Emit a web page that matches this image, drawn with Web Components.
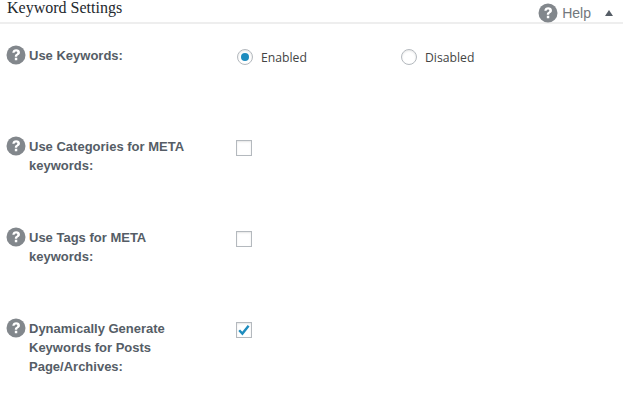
<!DOCTYPE html>
<html><head><meta charset="utf-8"><style>
html,body{margin:0;padding:0;background:#fff}
body{width:623px;height:402px;overflow:hidden}
</style></head><body>
<settings-panel>
<setting-row label="Use Keywords:"><radio-field checked>Enabled</radio-field><radio-field>Disabled</radio-field></setting-row>
<setting-row label="Use Categories for META keywords:"><check-field></check-field></setting-row>
<setting-row label="Use Tags for META keywords:"><check-field></check-field></setting-row>
<setting-row label="Dynamically Generate Keywords for Posts Page/Archives:"><check-field checked></check-field></setting-row>
</settings-panel>
<script>
const HELP=`<svg width="20" height="20" viewBox="0 0 20 20" aria-hidden="true"><circle cx="10" cy="10" r="9.5" fill="#82878c"/><path transform="translate(1 1) scale(.9)" d="M5.9 7.5C6.1 5 7.9 3.7 10.2 3.7c2.5 0 4.2 1.4 4.2 3.4 0 1.5-.8 2.3-1.9 3-.9.6-1.2 1-1.2 1.9H8.7c0-1.5.4-2.3 1.5-3 .9-.6 1.3-1 1.3-1.7 0-.8-.6-1.3-1.4-1.3-.9 0-1.6.6-1.7 1.6z M8.7 13h2.7v2.8H8.7z" fill="#fff"/></svg>`;
class SettingsPanel extends HTMLElement{constructor(){super();this.attachShadow({mode:'open'}).innerHTML=`<style>
:host{display:block;width:623px}
header{height:22px;border-bottom:2px solid #eee;display:flex;align-items:flex-start;justify-content:space-between}
h2{margin:0;padding:0 0 0 7px;font:400 16px/15px "Liberation Serif",serif;color:#23282d}
.tools{display:flex;align-items:center;margin-top:3px;padding-right:10px;color:#72777c;font:14px/20px "Liberation Sans",sans-serif}
.tools svg{margin-right:4px}
.tri{width:0;height:0;border:4.5px solid transparent;border-top:0;border-bottom:6px solid #555d66;margin-left:14px}
main{padding-top:22px}
</style><header><h2>Keyword Settings</h2><div class="tools">${HELP}<span>Help</span><i class="tri"></i></div></header><main><slot></slot></main>`}}
class SettingRow extends HTMLElement{constructor(){super();this.attachShadow({mode:'open'}).innerHTML=`<style>
:host{display:grid;grid-template-columns:236px 1fr;height:91px;box-sizing:border-box}
.l{display:flex;align-items:flex-start;padding-left:6px;gap:3px}
.l svg{flex:none;margin-top:-1px}
.t{font:700 13px/19px "Liberation Sans",sans-serif;color:#555d66;width:170px}
.c{display:flex;padding-top:1px}
</style><div class="l">${HELP}<div class="t"></div></div><div class="c"><slot></slot></div>`;
this.shadowRoot.querySelector('.t').textContent=this.getAttribute('label')}}
class RadioField extends HTMLElement{constructor(){super();const on=this.hasAttribute('checked');this.attachShadow({mode:'open'}).innerHTML=`<style>
:host{display:flex;width:164px;align-items:center;height:16px;font:12.2px/16px "Open Sans",sans-serif;color:#444;padding-left:1px;box-sizing:border-box;margin-top:2px}
.r{width:16px;height:16px;box-sizing:border-box;border:1px solid #b4b9be;border-radius:50%;margin-right:8px;display:flex;align-items:center;justify-content:center;box-shadow:inset 0 1px 2px rgba(0,0,0,.1);background:#fff}
.r i{width:8px;height:8px;border-radius:50%;background:#1e8cbe;display:${on?'block':'none'}}
.x{padding-top:1px}
</style><span class="r"><i></i></span><span class="x"><slot></slot></span>`}}
class CheckField extends HTMLElement{constructor(){super();const on=this.hasAttribute('checked');this.attachShadow({mode:'open'}).innerHTML=`<style>
:host{display:block;width:16px;height:16px;margin-top:2px}
.b{display:block;width:16px;height:16px;box-sizing:border-box;border:1px solid #b4b9be;background:#fff;box-shadow:inset 0 1px 2px rgba(0,0,0,.1)}
svg{display:${on?'block':'none'}}
</style><span class="b"><svg width="14" height="14" viewBox="0 0 14 14"><path d="M2.2 7.2 L5.4 10.6 L11.6 2.8" fill="none" stroke="#1e8cbe" stroke-width="2.4"/></svg></span>`}}
customElements.define('settings-panel',SettingsPanel);customElements.define('setting-row',SettingRow);customElements.define('radio-field',RadioField);customElements.define('check-field',CheckField);
</script>
</body></html>
